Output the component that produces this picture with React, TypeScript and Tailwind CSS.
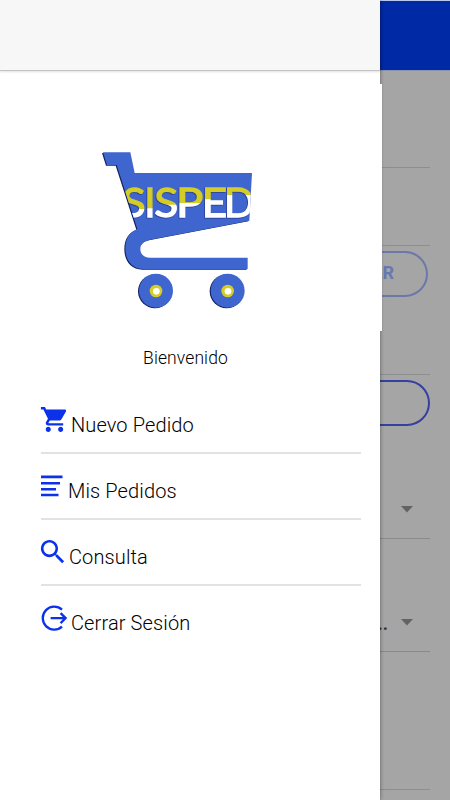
import type { ReactNode } from 'react'
import { IoMdCart, IoMdSearch } from 'react-icons/io'

const CART_BODY =
  'M39 37H121L134 99H486L478 242L180 299C160 304 151 314 151 327C151 343 162 353 181 353H473V387H160C126 387 106 360 106 326C106 293 121 275 142 267L80 75H51Z'

// split is the height at which a letter turns from yellow to white
const LETTERS = [
  { char: 'S', x: 96, width: 71, split: 207 },
  { char: 'I', x: 163, width: 34, split: 205 },
  { char: 'S', x: 193, width: 72, split: 194 },
  { char: 'P', x: 258, width: 82, split: 189 },
  { char: 'E', x: 335, width: 76, split: 178 },
  { char: 'D', x: 402, width: 92, split: 165 },
]

function Logo() {
  return (
    <svg viewBox="0 0 540 540" className="h-[180px] w-[180px]" role="img" aria-label="SISPED">
      <defs>
        <clipPath id="body">
          <path d={CART_BODY} />
        </clipPath>
        {LETTERS.map(({ x, split }) => (
          <linearGradient key={x} id={`letter-${x}`} gradientUnits="userSpaceOnUse" x1="0" y1={split - 1} x2="0" y2={split + 1}>
            <stop offset="0" stopColor="#d5cc25" />
            <stop offset="1" stopColor="#ffffff" />
          </linearGradient>
        ))}
      </defs>
      <path d={CART_BODY} className="fill-[#10205c]" transform="translate(-3 2)" />
      <path d={CART_BODY} className="fill-[#3f66cf]" />
      <g clipPath="url(#body)">
        <g className="drop-shadow-[-2px_2px_0_#26388c]" fontFamily="Lato, sans-serif" fontSize="122">
          {LETTERS.map(({ char, x, width }) => (
            <text
              key={x}
              x={x}
              y="230"
              textLength={width}
              lengthAdjust="spacingAndGlyphs"
              fill={`url(#letter-${x})`}
              stroke={`url(#letter-${x})`}
              strokeWidth="4"
            >
              {char}
            </text>
          ))}
        </g>
      </g>
      {[197, 412].map((cx) => (
        <g key={cx}>
          <circle cx={cx - 2} cy="454" r="51" className="fill-[#10205c]" />
          <circle cx={cx + 1} cy="452" r="51" className="fill-[#3f66cf]" />
          <circle cx={cx + 1} cy="453" r="19" className="fill-[#d5cc25]" />
          <circle cx={cx + 2} cy="454" r="10" className="fill-white" />
        </g>
      ))}
    </svg>
  )
}

function ListIcon() {
  return (
    <svg viewBox="0 0 22 22" className="h-[22px] w-[22px] fill-current">
      <path d="M0 0.6H21.5V3.2H0ZM0 6.9H19V9.5H0ZM0 13H15V15.5H0ZM0 18.8H17.5V21.2H0Z" />
    </svg>
  )
}

function LogOutIcon() {
  return (
    <svg viewBox="0 0 26 26" className="h-[26px] w-[26px] fill-none stroke-current stroke-[2.3]">
      <path d="M21 4.6A11.5 11.5 0 1 0 21 21.6M9.6 13.1H24.3M19.6 8.1L24.6 13.1L19.6 18.1" />
    </svg>
  )
}

function MenuItem({ icon, label, last }: { icon: ReactNode; label: string; last?: boolean }) {
  return (
    <li className={last ? 'flex h-[66px] items-start' : 'flex h-[66px] items-start border-b-2 border-[#e2e2e2]'}>
      <span className="flex shrink-0 pt-[17px] text-[#0b31ea]">{icon}</span>
      <span className="pt-[25px] text-[20px] leading-6 font-light tracking-[0.12px] whitespace-nowrap text-black">{label}</span>
    </li>
  )
}

function Drawer() {
  return (
    <aside className="absolute inset-y-0 left-0 w-[380px] bg-white shadow-[0_0_4px_rgba(0,0,0,0.45)]">
      <div className="h-[71px] border-b border-[#c4c4c4] bg-[#f7f7f7] shadow-[0_1px_2px_rgba(0,0,0,0.12)]" />
      <div className="mt-[13px] flex h-[247px] w-[382px] bg-white pt-[56px] pl-[90px]">
        <Logo />
      </div>
      <p className="mt-[15px] pr-[9px] text-center text-[17.5px] leading-6 font-light tracking-[0.1px] text-black">Bienvenido</p>
      <ul className="mt-[18px] ml-[41px] w-[320px]">
        <MenuItem icon={<IoMdCart className="-mt-px -ml-[3px] mr-[2px] h-[31px] w-[31px]" />} label="Nuevo Pedido" />
        <MenuItem icon={<span className="mt-[4px] mr-[5px]"><ListIcon /></span>} label="Mis Pedidos" />
        <MenuItem icon={<IoMdSearch className="-mt-px -ml-[4px] mr-[1px] h-[31px] w-[31px]" />} label="Consulta" />
        <MenuItem icon={<span className="mt-[2px] mr-[4px]"><LogOutIcon /></span>} label="Cerrar Sesión" last />
      </ul>
    </aside>
  )
}

function Caret() {
  return (
    <svg viewBox="0 0 12 7" className="mr-[17px] h-[7px] w-3 fill-[#636363]">
      <path d="M0 0H12L6 6.5Z" />
    </svg>
  )
}

export default function App() {
  return (
    <div className="relative h-[800px] w-[450px] overflow-hidden bg-[#a5a5a5] font-[Roboto,sans-serif]">
      <header className="h-[71px] border-t border-b border-t-[#b9c8f0] border-b-[#8d93a8] bg-[#0029a5]" />
      <main className="flex flex-col pr-5">
        <div className="h-[97px] border-b border-[#8e8e8e]" />
        <div className="h-[78px] border-b border-[#8e8e8e]" />
        <div className="mt-[5px] mr-[2px] flex h-[46px] items-center justify-end rounded-full border-2 border-[#6b79aa] pr-[32px] pb-[3px] text-[18px] font-bold text-[#6679b0]">
          AGREGAR
        </div>
        <div className="h-[78px] border-b border-[#8e8e8e]" />
        <div className="mt-[5px] h-[46px] rounded-full border-2 border-[#3540a0]" />
        <div className="flex h-[113px] items-end justify-end border-b border-[#8a8a8a] pb-[25px]">
          <Caret />
        </div>
        <div className="flex h-[113px] items-end justify-end border-b border-[#8a8a8a] pb-[25px]">
          <span className="mr-[13px] -mb-[8px] text-[18px] leading-5 font-bold text-[#303030]">...</span>
          <Caret />
        </div>
        <div className="h-[138px] border-b border-[#8e8e8e]" />
      </main>
      <Drawer />
    </div>
  )
}
